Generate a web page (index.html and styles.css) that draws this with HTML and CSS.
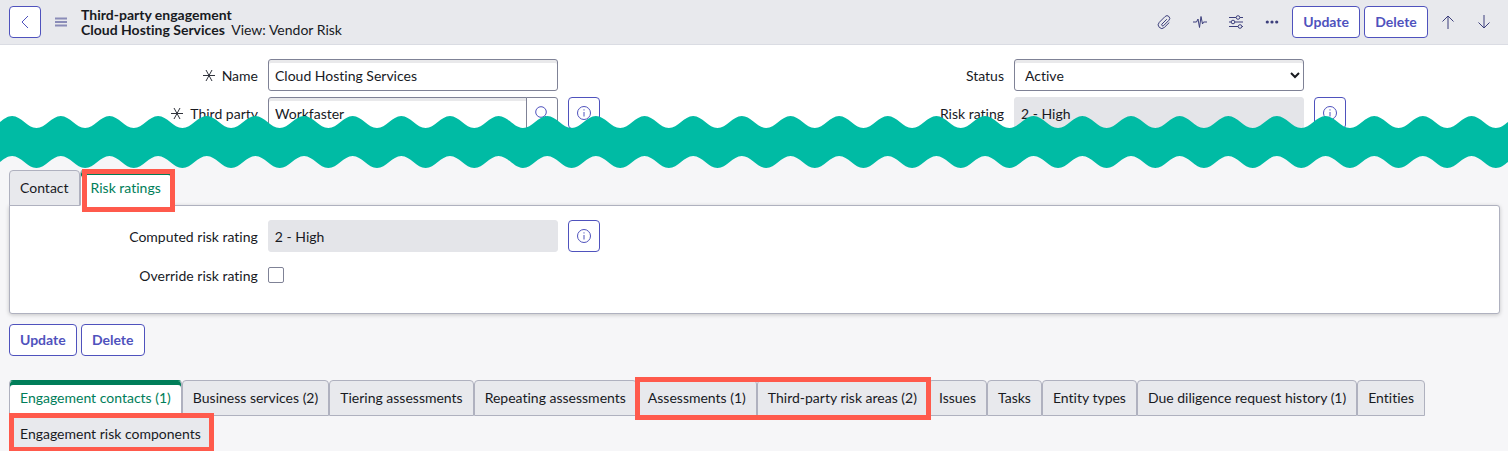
FILE: index.html
```html
<!DOCTYPE html>
<html lang="en">
<head>
    <meta charset="UTF-8">
    <meta name="viewport" content="width=device-width, initial-scale=1.0">
    <title>Cloud Hosting Services | Third-party engagement</title>
    <link rel="stylesheet" href="styles.css">
</head>
<body>

<svg class="sprite" aria-hidden="true">
    <symbol id="info" viewBox="0 0 16 16">
        <circle cx="8" cy="8" r="6.5"/>
        <path d="M8 7v4.5M8 4.3v1.2"/>
    </symbol>
    <symbol id="required" viewBox="0 0 14 14">
        <path d="M1 6.5h12M4 1l6 11M10 1L4 12"/>
    </symbol>
</svg>

<header class="header">
    <button class="btn btn-icon" aria-label="Back">
        <svg class="icon" viewBox="0 0 16 16"><path d="M11 2L5 8l6 6"/></svg>
    </button>
    <button class="tool menu" aria-label="Additional actions">
        <svg class="icon" viewBox="0 0 16 16"><path d="M2 4.5h12M2 8h12M2 11.5h12" stroke-width="2"/></svg>
    </button>
    <h1 class="title">
        Third-party engagement<br>
        Cloud Hosting Services <span class="view">View: Vendor Risk</span>
    </h1>
    <div class="tools">
        <button class="tool" aria-label="Attachments">
            <svg class="icon" viewBox="0 0 16 16"><path d="M10.8 5.2L6 10a1.1 1.1 0 0 0 1.6 1.6l5.3-5.3a2.6 2.6 0 0 0-3.8-3.8L3.3 8.3a3.6 3.6 0 0 0 5.1 5.1l4.9-4.9"/></svg>
        </button>
        <button class="tool" aria-label="Activity">
            <svg class="icon" viewBox="0 0 16 16"><path d="M1 8h3.5l1.5-3 1.5 8.5L9 2.5l1.5 7.5 1-2H15"/></svg>
        </button>
        <button class="tool" aria-label="Personalize form">
            <svg class="icon" viewBox="0 0 16 16"><path d="M1 3.5h7M12 3.5h3M1 8h2M7 8h8M1 12.5h9M14 12.5h1"/><circle cx="10" cy="3.5" r="1.8"/><circle cx="5" cy="8" r="1.8"/><circle cx="12" cy="12.5" r="1.8"/></svg>
        </button>
        <button class="tool" aria-label="More options">
            <svg class="icon dots" viewBox="0 0 16 16"><circle cx="3.3" cy="8" r="1.6"/><circle cx="8" cy="8" r="1.6"/><circle cx="12.7" cy="8" r="1.6"/></svg>
        </button>
        <button class="btn">Update</button>
        <button class="btn">Delete</button>
        <button class="tool" aria-label="Previous record">
            <svg class="icon" viewBox="0 0 16 16"><path d="M8 15V2M2.5 7.5L8 2l5.5 5.5"/></svg>
        </button>
        <button class="tool" aria-label="Next record">
            <svg class="icon" viewBox="0 0 16 16"><path d="M8 1v13M2.5 8.5L8 14l5.5-5.5"/></svg>
        </button>
    </div>
</header>

<section class="form">
    <div class="column">
        <div class="field">
            <label for="name"><svg class="required"><use href="#required"/></svg>Name</label>
            <input type="text" id="name" value="Cloud Hosting Services">
        </div>
        <div class="field">
            <label for="party"><svg class="required"><use href="#required"/></svg>Third party</label>
            <div class="lookup">
                <input type="text" id="party" value="Workfaster">
                <button class="search" aria-label="Look up third party">
                    <svg class="icon" viewBox="0 0 16 16"><circle cx="7" cy="7" r="5.3"/><path d="M11 11l3 3.5"/></svg>
                </button>
            </div>
            <button class="btn btn-icon" aria-label="Preview third party"><svg class="icon"><use href="#info"/></svg></button>
        </div>
    </div>
    <div class="column">
        <div class="field">
            <label for="status">Status</label>
            <select id="status">
                <option>Active</option>
            </select>
        </div>
        <div class="field">
            <label for="rating">Risk rating</label>
            <input type="text" id="rating" value="2 - High" readonly>
            <button class="btn btn-icon" aria-label="Preview risk rating"><svg class="icon"><use href="#info"/></svg></button>
        </div>
    </div>
</section>

<!-- torn edge between the two parts of the form: 32 waves, 4 on a line -->
<svg class="wave" viewBox="0 0 1488 52" preserveAspectRatio="none" aria-hidden="true">
    <path d="M-12 12
        c9 0 15-12 24-12s15 12 24 12 15-12 24-12 15 12 24 12 15-12 24-12 15 12 24 12 15-12 24-12 15 12 24 12
        s15-12 24-12 15 12 24 12 15-12 24-12 15 12 24 12 15-12 24-12 15 12 24 12 15-12 24-12 15 12 24 12
        s15-12 24-12 15 12 24 12 15-12 24-12 15 12 24 12 15-12 24-12 15 12 24 12 15-12 24-12 15 12 24 12
        s15-12 24-12 15 12 24 12 15-12 24-12 15 12 24 12 15-12 24-12 15 12 24 12 15-12 24-12 15 12 24 12
        s15-12 24-12 15 12 24 12 15-12 24-12 15 12 24 12 15-12 24-12 15 12 24 12 15-12 24-12 15 12 24 12
        s15-12 24-12 15 12 24 12 15-12 24-12 15 12 24 12 15-12 24-12 15 12 24 12 15-12 24-12 15 12 24 12
        s15-12 24-12 15 12 24 12 15-12 24-12 15 12 24 12 15-12 24-12 15 12 24 12 15-12 24-12 15 12 24 12
        s15-12 24-12 15 12 24 12 15-12 24-12 15 12 24 12 15-12 24-12 15 12 24 12 15-12 24-12 15 12 24 12
        V52
        c-9 0-15-12-24-12s-15 12-24 12-15-12-24-12-15 12-24 12-15-12-24-12-15 12-24 12-15-12-24-12-15 12-24 12
        s-15-12-24-12-15 12-24 12-15-12-24-12-15 12-24 12-15-12-24-12-15 12-24 12-15-12-24-12-15 12-24 12
        s-15-12-24-12-15 12-24 12-15-12-24-12-15 12-24 12-15-12-24-12-15 12-24 12-15-12-24-12-15 12-24 12
        s-15-12-24-12-15 12-24 12-15-12-24-12-15 12-24 12-15-12-24-12-15 12-24 12-15-12-24-12-15 12-24 12
        s-15-12-24-12-15 12-24 12-15-12-24-12-15 12-24 12-15-12-24-12-15 12-24 12-15-12-24-12-15 12-24 12
        s-15-12-24-12-15 12-24 12-15-12-24-12-15 12-24 12-15-12-24-12-15 12-24 12-15-12-24-12-15 12-24 12
        s-15-12-24-12-15 12-24 12-15-12-24-12-15 12-24 12-15-12-24-12-15 12-24 12-15-12-24-12-15 12-24 12
        s-15-12-24-12-15 12-24 12-15-12-24-12-15 12-24 12-15-12-24-12-15 12-24 12-15-12-24-12-15 12-24 12
        z"/>
</svg>

<main class="content">
    <div class="tabs form-tabs">
        <button class="tab">Contact</button>
        <div class="mark mark-rating"><button class="tab active">Risk ratings</button></div>
    </div>
    <section class="panel">
        <div class="field">
            <label for="computed">Computed risk rating</label>
            <input type="text" id="computed" value="2 - High" readonly>
            <button class="btn btn-icon" aria-label="Preview computed rating"><svg class="icon"><use href="#info"/></svg></button>
        </div>
        <div class="field">
            <label for="override">Override risk rating</label>
            <input type="checkbox" id="override">
        </div>
    </section>

    <div class="actions">
        <button class="btn">Update</button>
        <button class="btn">Delete</button>
    </div>

    <div class="tabs">
        <button class="tab active">Engagement contacts (1)</button>
        <button class="tab">Business services (2)</button>
        <button class="tab">Tiering assessments</button>
        <button class="tab">Repeating assessments</button>
        <div class="mark mark-assess">
            <button class="tab">Assessments (1)</button>
            <button class="tab">Third-party risk areas (2)</button>
        </div>
        <button class="tab">Issues</button>
        <button class="tab">Tasks</button>
        <button class="tab">Entity types</button>
        <button class="tab">Due diligence request history (1)</button>
        <button class="tab">Entities</button>
        <div class="mark mark-components"><button class="tab">Engagement risk components</button></div>
    </div>
</main>

</body>
</html>
```
FILE: styles.css
```css
* {
    box-sizing: border-box;
}
body {
    margin: 0;
    font-family: Lato, "Liberation Sans", sans-serif;
    font-size: 14px;
    line-height: 20px;
    font-variant-ligatures: none;
    color: #181a1f;
    background-color: #f6f6f8;
    overflow: hidden;
}
button, input, select {
    font: inherit;
    font-variant-ligatures: none;
    color: inherit;
    margin: 0;
}
button {
    cursor: pointer;
}
.sprite {
    display: none;
}
.icon {
    display: block;
    width: 16px;
    height: 16px;
    fill: none;
    stroke: currentColor;
}
.dots {
    fill: currentColor;
    stroke: none;
}

/* header */
.header {
    display: flex;
    align-items: center;
    padding: 6px 8px 6px 9px;
    background-color: #e8e9ed;
    border-bottom: 1px solid #dadce3;
}
.title {
    margin: 0;
    font-size: 14px;
    line-height: 15px;
    font-weight: bold;
}
.view {
    margin-left: 3px;
    font-weight: normal;
}
.tools {
    display: flex;
    align-items: center;
    gap: 4px;
    margin-left: auto;
}
.tool {
    width: 32px;
    height: 32px;
    padding: 8px;
    border: none;
    background: none;
    color: #3c3f7c;
}
.menu {
    width: 40px;
    padding: 8px 12px;
    color: #8a8cb8;
}
.btn {
    min-width: 64px;
    height: 32px;
    padding: 0 10px;
    border: 1px solid #4f52bd;
    border-radius: 4px;
    background-color: white;
    color: #4f52bd;
    font-weight: bold;
}
.btn-icon {
    width: 32px;
    min-width: 0;
    padding: 0 7px;
}

/* form */
.form {
    display: grid;
    grid-template-columns: 1fr 1fr;
    padding: 14px 8px 0;
    background-color: white;
}
.column {
    display: grid;
    gap: 6px;
}
.field {
    display: grid;
    grid-template-columns: 250fr 290fr 186fr;
    gap: 10px;
    align-items: center;
}
.field label {
    display: flex;
    align-items: center;
    justify-content: flex-end;
    gap: 6px;
    padding-top: 2px;
}
.required {
    width: 14px;
    height: 14px;
    fill: none;
    stroke: #30333c;
}
input[type="text"], select {
    width: 100%;
    min-width: 0;
    height: 32px;
    padding: 0 6px;
    border: 1px solid #7f8296;
    border-radius: 3px;
    background-color: white;
    box-shadow: inset 0 3px 0 #e9e9eb;
}
input[type="text"]:read-only {
    border-color: #e4e5e9;
    background-color: #e4e5e9;
    box-shadow: none;
}
.lookup {
    display: flex;
}
.lookup input[type="text"] {
    flex: 1;
    border-radius: 3px 0 0 3px;
}
.search {
    width: 32px;
    height: 32px;
    margin-left: -1px;
    padding: 0 7px;
    border: 1px solid #7f8296;
    border-radius: 0 3px 3px 0;
    background-color: white;
    color: #4f52bd;
}
input[type="checkbox"] {
    appearance: none;
    width: 16px;
    height: 16px;
    border: 1px solid #7f8296;
    border-radius: 2px;
    background-color: white;
}
.wave {
    display: block;
    position: relative;
    width: 100%;
    height: 52px;
    margin-top: -13px;
    fill: #00bba4;
}

/* tabs */
.content {
    padding: 2px 8px 0 9px;
}
.tabs {
    display: flex;
    flex-wrap: wrap;
}
.tab {
    height: 36px;
    padding: 0 10px;
    border: 1px solid #afb1bf;
    border-radius: 4px 4px 0 0;
    background-color: #e8e9ed;
    white-space: nowrap;
}
.tab.active {
    border-top-color: #007e59;
    border-bottom-color: white;
    background-color: white;
    box-shadow: inset 0 4px 0 #007e59;
    color: #007e59;
}
.form-tabs {
    margin-bottom: -1px;
}

/* red call-outs */
.mark {
    display: flex;
    position: relative;
}
.mark::after {
    content: "";
    position: absolute;
    inset: -3px;
    border: 5px solid #ff5a4c;
    pointer-events: none;
}
.mark-rating::after {
    inset: -1px -3px -6px 2px;
}
.mark-assess::after {
    inset: -3px -3px -4px -2px;
}
.mark-components::after {
    inset: -3px -2px 0 0;
}

.panel {
    display: grid;
    gap: 12px;
    padding: 14px 0 27px;
    border: 1px solid #afb1bf;
    border-radius: 0 3px 3px 3px;
    background-color: white;
    box-shadow: 0 1px 4px rgba(0,0,0,0.2);
}
.panel .field {
    grid-template-columns: 248fr 290fr 932fr;
}
.actions {
    display: flex;
    gap: 4px;
    padding: 10px 0 24px;
}
```
